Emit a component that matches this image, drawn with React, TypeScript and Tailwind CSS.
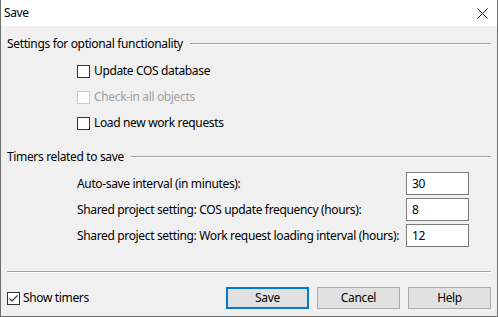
import React from 'react';

const font = { fontFamily: '"Segoe UI", "Noto Sans", sans-serif' };

const GroupHeader: React.FC<{ title: string }> = ({ title }) => (
  <div className="flex items-center h-[16px]">
    <span className="whitespace-nowrap">{title}</span>
    <div className="flex-1 ml-[7px] border-t border-b border-t-[#a0a0a0] border-b-white h-[2px]" />
  </div>
);

const CheckRow: React.FC<{ label: string; checked?: boolean; disabled?: boolean }> = ({ label, checked, disabled }) => (
  <div className="flex items-center h-[26px] pl-[70px]">
    <div
      className={`w-[13px] h-[13px] border flex items-center justify-center ${
        disabled ? 'border-[#cccccc] bg-white' : 'border-[#333333] bg-white'
      }`}
    >
      {checked && (
        <svg width="11" height="11" viewBox="0 0 11 11">
          <path d="M1.5 5.5 L4 8 L9.5 2.5" stroke="#333" strokeWidth="1.2" fill="none" />
        </svg>
      )}
    </div>
    <span className={`ml-[4px] ${disabled ? 'text-[#a0a0a0]' : 'text-black'}`}>{label}</span>
  </div>
);

const TimerRow: React.FC<{ label: string; value: string }> = ({ label, value }) => (
  <div className="flex items-center h-[23px] pl-[70px]">
    <span className="w-[329px] whitespace-nowrap">{label}</span>
    <div className="w-[63px] h-[23px] border border-[#7a7a7a] bg-white flex items-center pl-[5px]">{value}</div>
  </div>
);

export default function App() {
  return (
    <div
      style={font}
      className="w-[498px] h-[317px] flex flex-col border-l border-r border-b border-[#6e6e6e] bg-[#f0f0f0] text-[12px] tracking-[-0.35px] text-black overflow-hidden"
    >
      {/* Title bar */}
      <div className="h-[26px] bg-white flex items-center justify-between pl-[3px] pr-[9px]">
        <span>Save</span>
        <svg width="11" height="11" viewBox="0 0 11 11">
          <path d="M0.5 0.5 L10.5 10.5 M10.5 0.5 L0.5 10.5" stroke="#111" strokeWidth="1" />
        </svg>
      </div>

      {/* Body */}
      <div className="flex-1 flex flex-col pl-[6px] pr-[6px]">
        <div className="mt-[10px]">
          <GroupHeader title="Settings for optional functionality" />
        </div>
        <div className="mt-[6px]">
          <CheckRow label="Update COS database" />
          <CheckRow label="Check-in all objects" disabled />
          <CheckRow label="Load new work requests" />
        </div>

        <div className="mt-[13px]">
          <GroupHeader title="Timers related to save" />
        </div>
        <div className="mt-[7px] flex flex-col gap-[3px]">
          <TimerRow label="Auto-save interval (in minutes):" value="30" />
          <TimerRow label="Shared project setting: COS update frequency (hours):" value="8" />
          <TimerRow label="Shared project setting: Work request loading interval (hours):" value="12" />
        </div>

        <div className="mt-[24px] h-[2px] border-t border-b border-t-[#a0a0a0] border-b-white" />

        <div className="mt-[14px] flex items-center h-[22px]">
          <div className="flex items-center">
            <div className="w-[13px] h-[13px] border border-[#333333] bg-white flex items-center justify-center">
              <svg width="11" height="11" viewBox="0 0 11 11">
                <path d="M1.5 5.5 L4 8 L9.5 2.5" stroke="#333" strokeWidth="1.2" fill="none" />
              </svg>
            </div>
            <span className="ml-[3px]">Show timers</span>
          </div>
          <div className="ml-auto flex gap-[8px]">
            <button className="w-[83px] h-[22px] border-2 border-[#0078d7] bg-[#e1e1e1]">Save</button>
            <button className="w-[83px] h-[22px] border border-[#adadad] bg-[#e1e1e1]">Cancel</button>
            <button className="w-[83px] h-[22px] border border-[#adadad] bg-[#e1e1e1]">Help</button>
          </div>
        </div>
      </div>
    </div>
  );
}
